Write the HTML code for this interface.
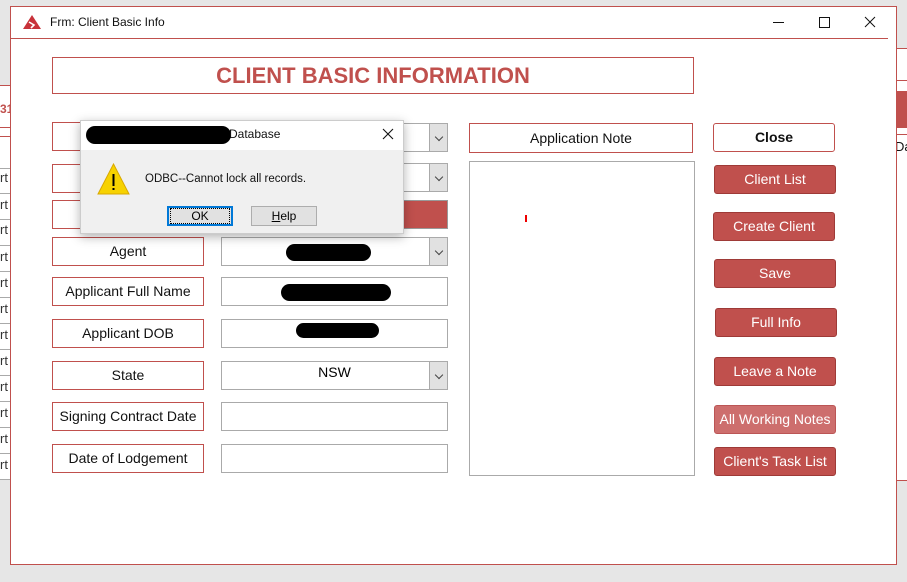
<!DOCTYPE html>
<html><head><style>
*{margin:0;padding:0;box-sizing:border-box}
body{width:907px;height:582px;background:#e6e6e6;position:relative;overflow:hidden;font-family:"Liberation Sans",sans-serif}
.a{position:absolute}
.lbl{position:absolute;left:52px;width:152px;height:29px;border:1px solid #c0504d;background:#fff;font-size:14px;color:#111;text-align:center;line-height:27px}
.val{position:absolute;left:221px;width:227px;height:29px;border:1px solid #aaa;background:#fff;font-size:14px;text-align:center;line-height:20px}
.dd{position:absolute;right:0;top:0;width:18px;height:27px;background:#e1e1e1;border-left:1px solid #aaa}
.dd::after{content:"";position:absolute;left:6px;top:10px;width:5px;height:5px;border-right:1px solid #444;border-bottom:1px solid #444;transform:rotate(45deg)}
.btn{position:absolute;width:122px;height:29px;background:#c0504d;border:1px solid #9e3a37;border-radius:3px;color:#fff;font-size:14px;text-align:center;line-height:27px}
.strip{position:absolute;left:0;width:10px;height:1px;background:#aaa}
.rt{position:absolute;left:0;font-size:13px;color:#333}
.blk{position:absolute;background:#000;border-radius:10px}
</style></head><body>
<div class="a" style="left:0;top:85px;width:10px;height:395px;background:#fff"></div>
<div class="strip" style="top:85px;background:#c0504d"></div>
<div class="strip" style="top:127px;background:#c0504d"></div>
<div class="strip" style="top:136px;background:#c0504d"></div>
<div class="a" style="left:0;top:102px;font-size:12px;color:#c0504d;font-weight:bold">31</div>
<div class="strip" style="top:168px"></div><div class="rt" style="top:170px">rt</div>
<div class="strip" style="top:193px"></div><div class="rt" style="top:197px">rt</div>
<div class="strip" style="top:219px"></div><div class="rt" style="top:222px">rt</div>
<div class="strip" style="top:245px"></div><div class="rt" style="top:249px">rt</div>
<div class="strip" style="top:271px"></div><div class="rt" style="top:275px">rt</div>
<div class="strip" style="top:297px"></div><div class="rt" style="top:301px">rt</div>
<div class="strip" style="top:323px"></div><div class="rt" style="top:327px">rt</div>
<div class="strip" style="top:349px"></div><div class="rt" style="top:353px">rt</div>
<div class="strip" style="top:375px"></div><div class="rt" style="top:379px">rt</div>
<div class="strip" style="top:401px"></div><div class="rt" style="top:405px">rt</div>
<div class="strip" style="top:427px"></div><div class="rt" style="top:431px">rt</div>
<div class="strip" style="top:453px"></div><div class="rt" style="top:457px">rt</div>
<div class="strip" style="top:479px"></div>
<div class="a" style="left:896px;top:48px;width:11px;height:432px;background:#fff"></div>
<div class="a" style="left:896px;top:48px;width:11px;height:1px;background:#c0504d"></div>
<div class="a" style="left:896px;top:80px;width:11px;height:1px;background:#c0504d"></div>
<div class="a" style="left:896px;top:91px;width:11px;height:37px;background:#c0504d"></div>
<div class="a" style="left:896px;top:134px;width:11px;height:1px;background:#c0504d"></div>
<div class="a" style="left:895px;top:139px;font-size:13px;color:#111">Da</div>
<div class="a" style="left:896px;top:480px;width:11px;height:1px;background:#c0504d"></div>
<div class="a" style="left:10px;top:6px;width:887px;height:559px;background:#fff;border:1px solid #c0504d"></div>
<div class="a" style="left:11px;top:38px;width:877px;height:1px;background:#c0504d"></div>
<svg class="a" style="left:23px;top:15px" width="18" height="14"><path d="M9 0 L18 14 L0 14 Z" fill="#c8323a"/><path d="M6 7 L11 10 L8 13" stroke="#fff" stroke-width="1.6" fill="none"/></svg>
<div class="a" style="left:50px;top:15px;font-size:12px;color:#111">Frm: Client Basic Info</div>
<div class="a" style="left:773px;top:22px;width:11px;height:1px;background:#111"></div>
<div class="a" style="left:819px;top:17px;width:11px;height:11px;border:1px solid #111"></div>
<svg class="a" style="left:864px;top:16px" width="12" height="12"><path d="M1 1L11 11M11 1L1 11" stroke="#111" stroke-width="1"/></svg>
<div class="a" style="left:52px;top:57px;width:642px;height:37px;border:1px solid #c0504d;text-align:center;color:#c0504d;font-weight:bold;font-size:22px;line-height:35px">CLIENT BASIC INFORMATION</div>
<div class="lbl" style="top:122px"></div>
<div class="lbl" style="top:164px"></div>
<div class="lbl" style="top:200px"></div>
<div class="lbl" style="top:237px">Agent</div>
<div class="lbl" style="top:277px">Applicant Full Name</div>
<div class="lbl" style="top:319px">Applicant DOB</div>
<div class="lbl" style="top:361px">State</div>
<div class="lbl" style="top:402px">Signing Contract Date</div>
<div class="lbl" style="top:444px">Date of Lodgement</div>
<div class="val" style="top:123px"><div class="dd"></div></div>
<div class="val" style="top:163px"><div class="dd"></div></div>
<div class="a" style="left:221px;top:200px;width:227px;height:29px;background:#c0504d;border:1px solid #999"></div>
<div class="val" style="top:237px"><div class="dd"></div></div>
<div class="val" style="top:277px"></div>
<div class="val" style="top:319px"></div>
<div class="val" style="top:361px">NSW<div class="dd"></div></div>
<div class="val" style="top:402px"></div>
<div class="val" style="top:444px"></div>
<div class="blk" style="left:286px;top:244px;width:85px;height:17px"></div>
<div class="blk" style="left:281px;top:284px;width:110px;height:17px"></div>
<div class="blk" style="left:296px;top:323px;width:83px;height:15px"></div>
<div class="a" style="left:469px;top:123px;width:224px;height:30px;border:1px solid #c0504d;text-align:center;font-size:14px;line-height:28px;color:#111">Application Note</div>
<div class="a" style="left:469px;top:161px;width:226px;height:315px;border:1px solid #aaa"></div>
<div class="a" style="left:525px;top:215px;width:2px;height:7px;background:#e00"></div>
<div class="btn" style="left:713px;top:123px;background:#fff;border-color:#c0504d;color:#111;font-weight:bold">Close</div>
<div class="btn" style="left:714px;top:165px">Client List</div>
<div class="btn" style="left:713px;top:212px">Create Client</div>
<div class="btn" style="left:714px;top:259px">Save</div>
<div class="btn" style="left:715px;top:308px">Full Info</div>
<div class="btn" style="left:714px;top:357px">Leave a Note</div>
<div class="btn" style="left:714px;top:405px;background:#cd6e6d;border-color:#b55">All Working Notes</div>
<div class="btn" style="left:714px;top:447px">Client's Task List</div>
<div class="a" style="left:80px;top:120px;width:324px;height:114px;background:#f0f0f0;border:1px solid #ccc;box-shadow:0 3px 10px rgba(0,0,0,.3)"></div>
<div class="a" style="left:81px;top:121px;width:322px;height:29px;background:#fff"></div>
<div class="blk" style="left:86px;top:126px;width:145px;height:18px"></div>
<div class="a" style="left:229px;top:127px;font-size:12px;color:#111">Database</div>
<svg class="a" style="left:382px;top:128px" width="12" height="12"><path d="M1 1L11 11M11 1L1 11" stroke="#111" stroke-width="1.1"/></svg>
<svg class="a" style="left:97px;top:163px" width="33" height="32"><path d="M16.5 1 L32 31 L1 31 Z" fill="#f7d200" stroke="#d8a800"/><rect x="15.5" y="11" width="2" height="12" fill="#000"/><rect x="15.5" y="25" width="2" height="2" fill="#000"/></svg>
<div class="a" style="left:145px;top:173px;font-size:11.5px;color:#111">ODBC--Cannot lock all records.</div>
<div class="a" style="left:167px;top:206px;width:66px;height:20px;background:#e1e1e1;border:2px solid #0078d7;text-align:center;font-size:12px;line-height:16px"><span style="outline:1px dotted #000;padding:0 20px">OK</span></div>
<div class="a" style="left:251px;top:206px;width:66px;height:20px;background:#e1e1e1;border:1px solid #adadad;text-align:center;font-size:12px;line-height:18px"><u>H</u>elp</div>
</body></html>
